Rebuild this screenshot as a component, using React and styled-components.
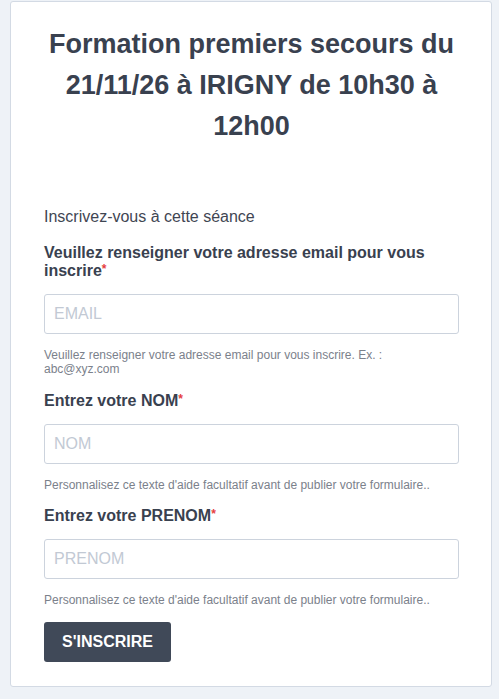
import React from "react";
import styled, { createGlobalStyle } from "styled-components";

const Global = createGlobalStyle`
  html, body { margin: 0; padding: 0; background: #eef2f7; }
  body { font-family: "Liberation Sans", Arial, sans-serif; }
  * { box-sizing: border-box; }
`;

const Page = styled.div`
  padding: 1px 7px 12px 10px;
  min-height: 699px;
`;

const Card = styled.div`
  background: #fff;
  border: 1px solid #d3dae4;
  border-radius: 3px;
  padding: 22px 32px 24px 33px;
`;

const Title = styled.h1`
  margin: 0;
  font-size: 27px;
  line-height: 41px;
  font-weight: 700;
  color: #39414f;
  text-align: center;
  padding: 0 4px;
`;

const Intro = styled.p`
  margin: 60px 0 0;
  font-size: 16px;
  line-height: 20px;
  color: #3f4653;
`;

const Field = styled.div`
  display: flex;
  flex-direction: column;
  margin-top: ${(p) => p.$top}px;
`;

const Label = styled.label`
  font-size: 16px;
  line-height: 18px;
  font-weight: 700;
  color: #39414f;
`;

const Req = styled.span`
  color: #e53e3e;
  font-size: 12px;
  position: relative;
  top: -3px;
  line-height: 0;
`;

const Input = styled.input`
  margin-top: 14px;
  height: 40px;
  width: 100%;
  border: 1px solid #ccd3dd;
  border-radius: 3px;
  padding: 0 9px;
  font-family: "Liberation Sans", Arial, sans-serif;
  font-size: 16px;
  color: #333;
  outline: none;
  &::placeholder { color: #c2c9d4; }
`;

const Help = styled.div`
  margin-top: 14px;
  font-size: 12px;
  line-height: 14px;
  color: #7b818b;
  padding-right: ${(p) => p.$pr || 0}px;
`;

const Button = styled.button`
  margin-top: 15px;
  height: 40px;
  width: 127px;
  background: #404958;
  border: none;
  border-radius: 3px;
  color: #fff;
  font-family: "Liberation Sans", Arial, sans-serif;
  font-weight: 700;
  font-size: 16px;
  cursor: pointer;
`;

export default function App() {
  return (
    <>
      <Global />
      <Page>
        <Card>
          <Title>Formation premiers secours du 21/11/26 à IRIGNY de 10h30 à 12h00</Title>
          <Intro>Inscrivez-vous à cette séance</Intro>
          <Field $top={17}>
            <Label>
              Veuillez renseigner votre adresse email pour vous inscrire<Req>*</Req>
            </Label>
            <Input placeholder="EMAIL" />
            <Help $pr={60}>Veuillez renseigner votre adresse email pour vous inscrire. Ex. : abc@xyz.com</Help>
          </Field>
          <Field $top={16}>
            <Label>
              Entrez votre NOM<Req>*</Req>
            </Label>
            <Input placeholder="NOM" />
            <Help>Personnalisez ce texte d'aide facultatif avant de publier votre formulaire..</Help>
          </Field>
          <Field $top={15}>
            <Label>
              Entrez votre PRENOM<Req>*</Req>
            </Label>
            <Input placeholder="PRENOM" />
            <Help>Personnalisez ce texte d'aide facultatif avant de publier votre formulaire..</Help>
          </Field>
          <Button>S'INSCRIRE</Button>
        </Card>
      </Page>
    </>
  );
}
